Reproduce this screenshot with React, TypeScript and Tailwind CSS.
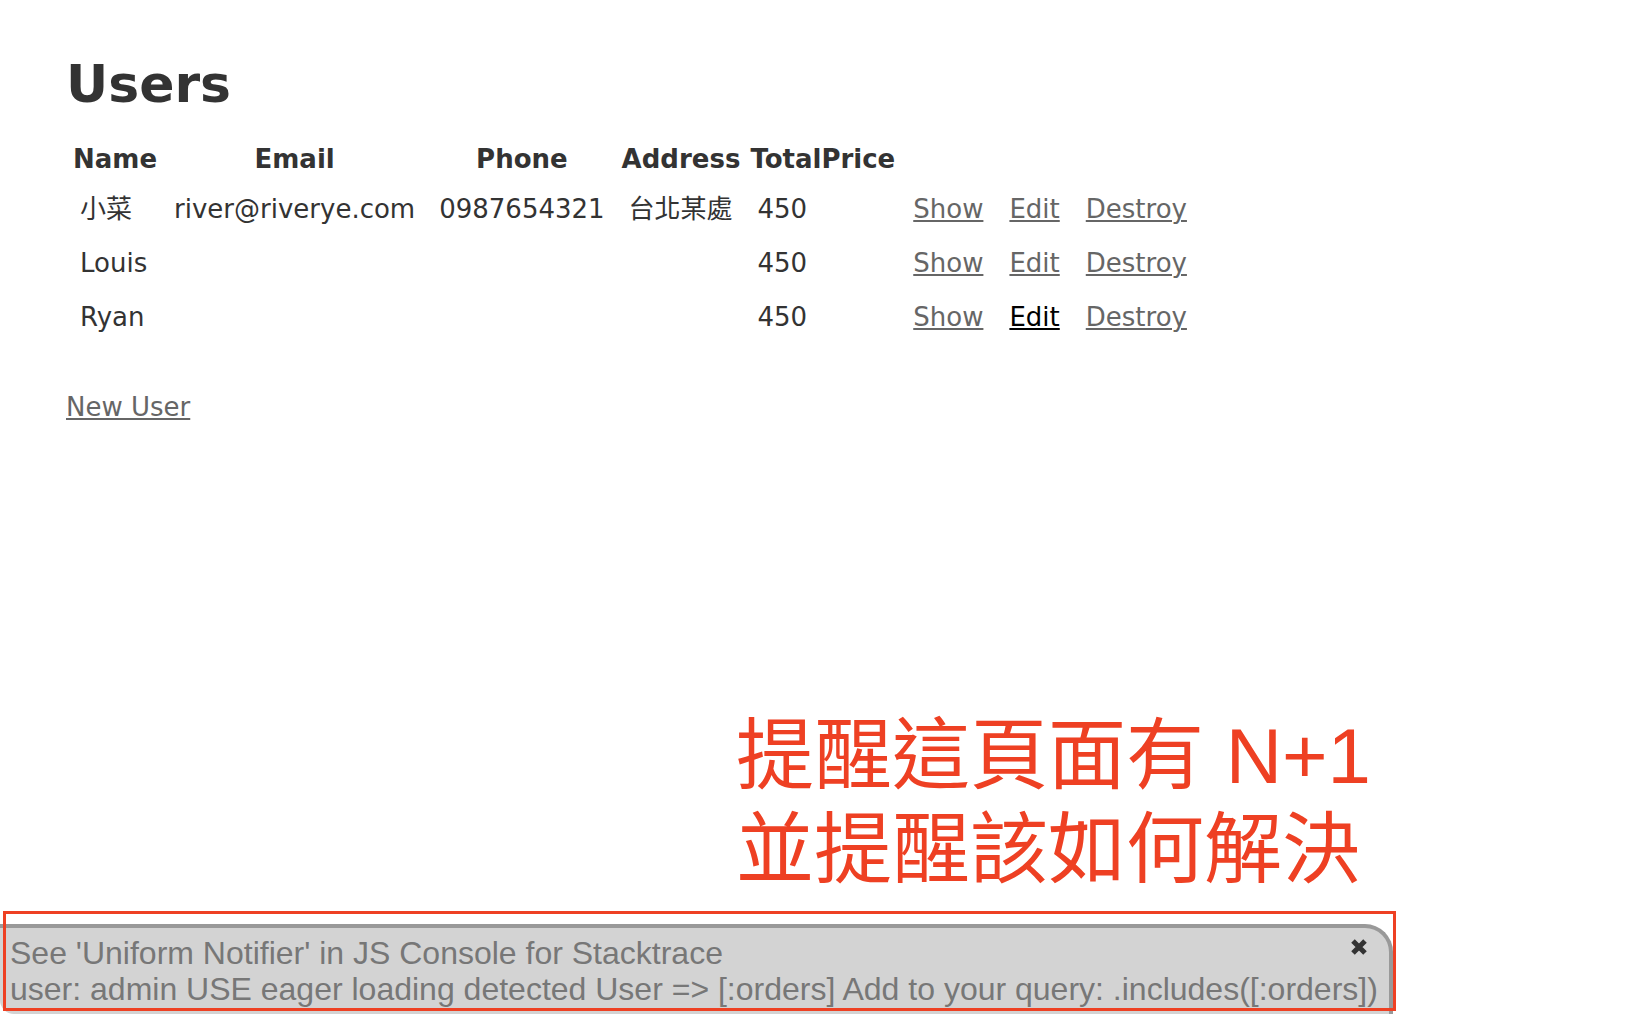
const users = [
  { name: "小菜", email: "river@riverye.com", phone: "0987654321", address: "台北某處", total: 450 },
  { name: "Louis", email: "", phone: "", address: "", total: 450 },
  { name: "Ryan", email: "", phone: "", address: "", total: 450, editActive: true },
];

const headings = ["Name", "Email", "Phone", "Address", "TotalPrice"];
const line = "underline decoration-2 underline-offset-2 hover:text-black";
const cell = "px-2.5 pb-3.5";
const linkCell = "px-[11px] pb-3.5";

function TextLink({ href, label, active }: { href: string; label: string; active?: boolean }) {
  return (
    <a href={href} className={`${line} ${active ? "text-black" : "text-[#666]"}`}>
      {label}
    </a>
  );
}

function UsersTable() {
  return (
    <table className="border-separate border-spacing-1">
      <thead>
        <tr>
          {headings.map((h) => (
            <th key={h} scope="col" className="px-[3px] pb-2.5">
              {h}
            </th>
          ))}
          <td colSpan={3} />
        </tr>
      </thead>
      <tbody>
        {users.map((u) => (
          <tr key={u.name}>
            <td className={cell}>{u.name}</td>
            <td className={cell}>{u.email}</td>
            <td className={cell}>{u.phone}</td>
            <td className={cell}>{u.address}</td>
            <td className={cell}>{u.total}</td>
            <td className={linkCell}>
              <TextLink href="#show" label="Show" />
            </td>
            <td className={linkCell}>
              <TextLink href="#edit" label="Edit" active={u.editActive} />
            </td>
            <td className={linkCell}>
              <TextLink href="#destroy" label="Destroy" />
            </td>
          </tr>
        ))}
      </tbody>
    </table>
  );
}

function Notifier() {
  return (
    <div className="relative w-fit pt-[13px]">
      <div className="rounded-tr-[28px] rounded-bl-[14px] border-t-4 border-r-4 border-[#999] bg-[#d3d3d3] py-[7px] pr-[11px] pl-2.5 font-['Liberation_Sans',Arial,sans-serif] text-[32px] leading-9 text-[#777]">
        <p className="whitespace-nowrap">
          See 'Uniform Notifier' in JS Console for Stacktrace
          <br />
          user: admin USE eager loading detected User =&gt; [:orders] Add to your query: .includes([:orders])
        </p>
        <button type="button" aria-label="Close" className="absolute top-7 right-[26px] text-[#333]">
          <svg viewBox="0 0 16 16" className="size-4" fill="none" stroke="currentColor" strokeWidth="5">
            <path d="M2 2 14 14M14 2 2 14" />
          </svg>
        </button>
      </div>
      <div className="pointer-events-none absolute top-0 -right-[3px] bottom-[3px] left-[3px] border-[3px] border-[#ee4023]" />
    </div>
  );
}

export default function App() {
  return (
    <div className="flex min-h-screen flex-col overflow-hidden bg-white font-['DejaVu_Sans','Noto_Sans_CJK_TC',sans-serif] text-[26px] leading-9 text-[#333]">
      <main className="px-[66px] pt-12">
        <h1 className="mb-[17px] text-[52px] leading-[72px] font-bold">Users</h1>
        <UsersTable />
        <p className="pt-9">
          <TextLink href="#new" label="New User" />
        </p>
      </main>
      <div className="mt-auto w-fit">
        <p className="mb-3.5 ml-[736px] font-['Liberation_Sans','Noto_Sans_CJK_TC',sans-serif] text-[78px] leading-[94px] whitespace-nowrap text-[#ee4023]">
          提醒這頁面有 N+1
          <br />
          並提醒該如何解決
        </p>
        <Notifier />
      </div>
    </div>
  );
}
